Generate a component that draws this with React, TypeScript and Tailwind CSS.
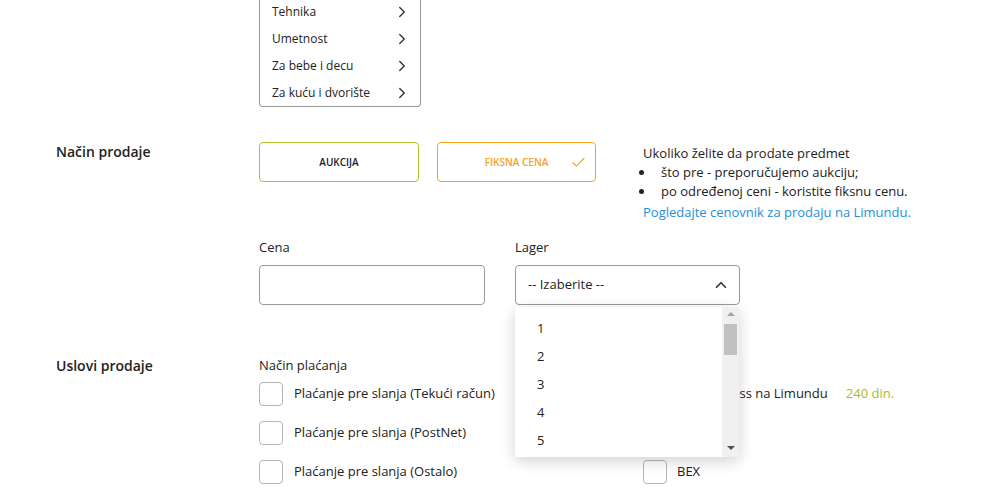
import { Check, ChevronRight, ChevronUp } from "lucide-react";

const categories = ["Tehnika", "Umetnost", "Za bebe i decu", "Za kuću i dvorište"];
const paymentOptions = [
  "Plaćanje pre slanja (Tekući račun)",
  "Plaćanje pre slanja (PostNet)",
  "Plaćanje pre slanja (Ostalo)",
];

function Box() {
  return <span className="block w-6 h-6 shrink-0 rounded-[4px] border border-[#b5b5b5] bg-white" />;
}

export default function App() {
  return (
    <div className="min-h-[494px] bg-white text-[#222] font-['Open_Sans',sans-serif] text-[13px] pl-[56px]">
      {/* Category list */}
      <div className="grid grid-cols-[203px_1fr]">
        <div />
        <div className="w-[162px] -mt-[2px] border border-t-0 border-[#9a9a9a] rounded-b-[4px]">
          {categories.map((c) => (
            <div key={c} className="h-[27px] flex items-center justify-between pl-3 pr-[9px] text-[12px]">
              <span>{c}</span>
              <ChevronRight size={18} strokeWidth={1.8} className="text-[#333]" />
            </div>
          ))}
        </div>
      </div>

      {/* Način prodaje */}
      <div className="grid grid-cols-[203px_1fr] mt-[35px]">
        <div className="text-[14px] font-semibold leading-[17px] pt-[1px]">Način prodaje</div>
        <div>
          <div className="flex items-start">
            <button className="w-[160px] h-[40px] rounded-[4px] border border-[#a8c426] text-[10px] font-semibold text-[#1a1a2e]">
              AUKCIJA
            </button>
            <button className="relative ml-[18px] w-[159px] h-[40px] rounded-[4px] border border-[#f7a21b] text-[10px] font-semibold text-[#f7a21b]">
              FIKSNA CENA
              <Check size={17} strokeWidth={1.5} className="absolute right-[8px] top-[11px] text-[#f7a21b]" />
            </button>
            <div className="ml-[47px] leading-[19px] pt-[2px]">
              <p>Ukoliko želite da prodate predmet</p>
              <ul className="list-disc pl-[12px]">
                <li className="pl-[6px]">što pre - preporučujemo aukciju;</li>
                <li className="pl-[6px]">po određenoj ceni - koristite fiksnu cenu.</li>
              </ul>
              <a className="block mt-[2px] text-[#1e8fd8]" href="#">
                Pogledajte cenovnik za prodaju na Limundu.
              </a>
            </div>
          </div>

          {/* Cena / Lager */}
          <div className="flex mt-[16px]">
            <div className="w-[226px]">
              <div className="leading-[19px] mb-[8px]">Cena</div>
              <input className="w-full h-[40px] rounded-[4px] border border-[#9a9a9a] outline-none" />
            </div>
            <div className="relative ml-[30px] w-[225px]">
              <div className="leading-[19px] mb-[8px]">Lager</div>
              <div className="h-[40px] rounded-[4px] border border-[#9a9a9a] flex items-center justify-between pl-[12px] pr-[9px]">
                <span>-- Izaberite --</span>
                <ChevronUp size={18} strokeWidth={2.2} className="text-[#333]" />
              </div>
              {/* open dropdown list */}
              <div className="absolute z-10 left-0 top-[69px] w-[224px] h-[150px] bg-white flex shadow-[0_4px_14px_rgba(0,0,0,0.18)]">
                <div className="flex-1 pt-[8px] pl-[22px] text-[13px]">
                  {[1, 2, 3, 4, 5].map((n) => (
                    <div key={n} className="h-[28px] flex items-center">{n}</div>
                  ))}
                </div>
                <div className="w-[17px] bg-[#f0f0f0] flex flex-col items-center">
                  <span className="mt-[5px] w-0 h-0 border-x-[4px] border-x-transparent border-b-[4px] border-b-[#a3a3a3]" />
                  <span className="mt-[8px] w-[13px] h-[31px] bg-[#c1c1c1]" />
                  <span className="mt-auto mb-[7px] w-0 h-0 border-x-[4px] border-x-transparent border-t-[4px] border-t-[#505050]" />
                </div>
              </div>
            </div>
          </div>
        </div>
      </div>

      {/* Uslovi prodaje */}
      <div className="grid grid-cols-[203px_1fr] mt-[50px]">
        <div className="text-[14px] font-semibold">Uslovi prodaje</div>
        <div>
          <div className="leading-[19px] pt-[1px]">Način plaćanja</div>
          <div className="grid grid-cols-[384px_1fr] gap-y-[15px] mt-[7px]">
            <label className="flex items-center gap-[11px]"><Box /><span>{paymentOptions[0]}</span></label>
            <label className="flex items-center gap-[8px]">
              <Box />
              <span>Post Express na Limundu</span>
              <span className="ml-[10px] text-[#a9bb2a]">240 din.</span>
            </label>
            <label className="flex items-center gap-[11px]"><Box /><span>{paymentOptions[1]}</span></label>
            <div />
            <label className="flex items-center gap-[11px]"><Box /><span>{paymentOptions[2]}</span></label>
            <label className="flex items-center gap-[10px]"><Box /><span>BEX</span></label>
          </div>
        </div>
      </div>
    </div>
  );
}
